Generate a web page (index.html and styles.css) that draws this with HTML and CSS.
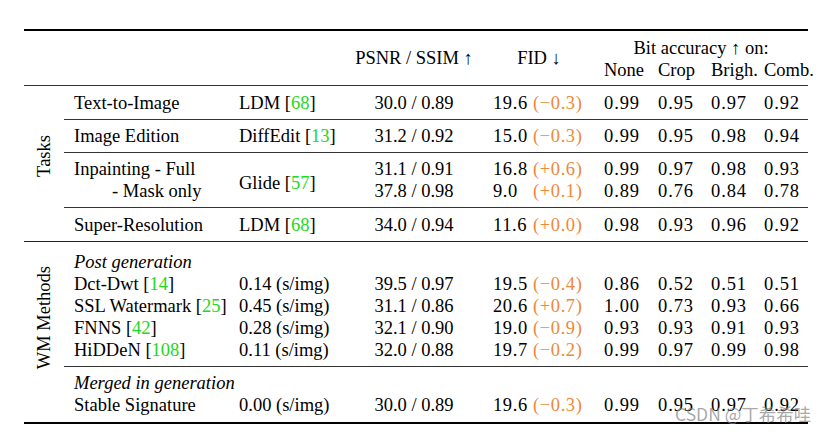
FILE: index.html
```html
<!DOCTYPE html>
<html>
<head>
<meta charset="utf-8">
<link rel="stylesheet" href="styles.css">
</head>
<body>
<div class="page">
<table class="results">
  <colgroup>
    <col class="c0"><col class="c1"><col class="c2"><col class="c3"><col class="c4">
    <col class="c5"><col class="c6"><col class="c7"><col class="c8">
  </colgroup>
  <thead>
    <tr class="h1">
      <th></th><th></th><th></th>
      <th rowspan="2" class="mid">PSNR / SSIM ↑</th>
      <th rowspan="2" class="mid">FID ↓</th>
      <th colspan="4" class="bitacc">Bit accuracy ↑ on:</th>
    </tr>
    <tr class="h2">
      <th></th><th></th><th></th>
      <th class="bit">None</th><th class="bit">Crop</th><th class="bit">Brigh.</th><th class="bit">Comb.</th>
    </tr>
  </thead>
  <tbody class="tasks">
    <tr class="single sep">
      <td rowspan="5" class="side side-tasks"><span class="vlabel">Tasks</span></td>
      <td class="label">Text-to-Image</td>
      <td class="method">LDM [<span class="cite">68</span>]</td>
      <td class="psnr">30.0 / 0.89</td>
      <td class="fid"><span class="fv">19.6</span><span class="delta">(−0.3)</span></td>
      <td class="bit num">0.99</td><td class="bit num">0.95</td><td class="bit num">0.97</td><td class="bit num">0.92</td>
    </tr>
    <tr class="single short sep">
      <td class="label">Image Edition</td>
      <td class="method">DiffEdit [<span class="cite">13</span>]</td>
      <td class="psnr">31.2 / 0.92</td>
      <td class="fid"><span class="fv">15.0</span><span class="delta">(−0.3)</span></td>
      <td class="bit num">0.99</td><td class="bit num">0.95</td><td class="bit num">0.98</td><td class="bit num">0.94</td>
    </tr>
    <tr class="first">
      <td class="label">Inpainting - Full</td>
      <td rowspan="2" class="method sepcell">Glide [<span class="cite">57</span>]</td>
      <td class="psnr">31.1 / 0.91</td>
      <td class="fid"><span class="fv">16.8</span><span class="delta">(+0.6)</span></td>
      <td class="bit num">0.99</td><td class="bit num">0.97</td><td class="bit num">0.98</td><td class="bit num">0.93</td>
    </tr>
    <tr class="last sep">
      <td class="label indent">- Mask only</td>
      <td class="psnr">37.8 / 0.98</td>
      <td class="fid"><span class="fv">9.0</span><span class="delta">(+0.1)</span></td>
      <td class="bit num">0.89</td><td class="bit num">0.76</td><td class="bit num">0.84</td><td class="bit num">0.78</td>
    </tr>
    <tr class="single">
      <td class="label">Super-Resolution</td>
      <td class="method">LDM [<span class="cite">68</span>]</td>
      <td class="psnr">34.0 / 0.94</td>
      <td class="fid"><span class="fv">11.6</span><span class="delta">(+0.0)</span></td>
      <td class="bit num">0.98</td><td class="bit num">0.93</td><td class="bit num">0.96</td><td class="bit num">0.92</td>
    </tr>
  </tbody>
  <tbody class="wm">
    <tr class="group-head g1">
      <td rowspan="8" class="side side-wm"><span class="vlabel">WM Methods</span></td>
      <td class="label"><em>Post generation</em></td>
      <td></td><td></td><td></td><td></td><td></td><td></td><td></td>
    </tr>
    <tr class="line">
      <td class="label">Dct-Dwt [<span class="cite">14</span>]</td>
      <td class="method">0.14 (s/img)</td>
      <td class="psnr">39.5 / 0.97</td>
      <td class="fid"><span class="fv">19.5</span><span class="delta">(−0.4)</span></td>
      <td class="bit num">0.86</td><td class="bit num">0.52</td><td class="bit num">0.51</td><td class="bit num">0.51</td>
    </tr>
    <tr class="line">
      <td class="label">SSL Watermark [<span class="cite">25</span>]</td>
      <td class="method">0.45 (s/img)</td>
      <td class="psnr">31.1 / 0.86</td>
      <td class="fid"><span class="fv">20.6</span><span class="delta">(+0.7)</span></td>
      <td class="bit num">1.00</td><td class="bit num">0.73</td><td class="bit num">0.93</td><td class="bit num">0.66</td>
    </tr>
    <tr class="line">
      <td class="label">FNNS [<span class="cite">42</span>]</td>
      <td class="method">0.28 (s/img)</td>
      <td class="psnr">32.1 / 0.90</td>
      <td class="fid"><span class="fv">19.0</span><span class="delta">(−0.9)</span></td>
      <td class="bit num">0.93</td><td class="bit num">0.93</td><td class="bit num">0.91</td><td class="bit num">0.93</td>
    </tr>
    <tr class="line g1-end sep">
      <td class="label">HiDDeN [<span class="cite">108</span>]</td>
      <td class="method">0.11 (s/img)</td>
      <td class="psnr">32.0 / 0.88</td>
      <td class="fid"><span class="fv">19.7</span><span class="delta">(−0.2)</span></td>
      <td class="bit num">0.99</td><td class="bit num">0.97</td><td class="bit num">0.99</td><td class="bit num">0.98</td>
    </tr>
    <tr class="group-head g2">
      <td class="label"><em>Merged in generation</em></td>
      <td></td><td></td><td></td><td></td><td></td><td></td><td></td>
    </tr>
    <tr class="line g2-end">
      <td class="label">Stable Signature</td>
      <td class="method">0.00 (s/img)</td>
      <td class="psnr">30.0 / 0.89</td>
      <td class="fid"><span class="fv">19.6</span><span class="delta">(−0.3)</span></td>
      <td class="bit num">0.99</td><td class="bit num">0.95</td><td class="bit num">0.97</td><td class="bit num">0.92</td>
    </tr>
  </tbody>
</table>
<div class="watermark">CSDN @丁希希哇</div>
</div>
</body>
</html>
```

FILE: styles.css
```css
html, body {
  margin: 0;
  padding: 0;
  background: #ffffff;
}

.page {
  position: relative;
  width: 826px;
  height: 432px;
  padding-top: 29px;
  padding-left: 24px;
  box-sizing: border-box;
  font-family: "Liberation Serif", "Times New Roman", serif;
  color: #000;
}

.results {
  border-collapse: collapse;
  table-layout: fixed;
  width: 784px;
  font-size: 18.5px;
  line-height: 22px;
  border-top: 2px solid #000;
  border-bottom: 2px solid #000;
}

.c0 { width: 40px; }
.c1 { width: 170px; }
.c2 { width: 116px; }
.c3 { width: 128px; }
.c4 { width: 122px; }
.c5 { width: 54px; }
.c6 { width: 53px; }
.c7 { width: 53px; }
.c8 { width: 48px; }

th, td {
  padding: 0;
  white-space: nowrap;
  font-weight: normal;
  text-align: left;
  vertical-align: middle;
}

thead tr.h1 th { height: 28px; vertical-align: bottom; }
thead tr.h2 th { height: 26px; vertical-align: top; }
thead tr.h2 { border-bottom: 1px solid #333; }
thead th.mid { text-align: center; vertical-align: middle; padding-top: 0; }
thead tr.h1 th.mid { vertical-align: middle; }
thead th.bitacc { text-align: center; padding-right: 6px; }

.bit { padding-left: 4px; }
.num { letter-spacing: 0.9px; }

.label { padding-left: 10px; }
.label.indent { padding-left: 48px; }
.method { padding-left: 5px; }
.psnr { text-align: center; }
.fid { padding-left: 15px; letter-spacing: 0.6px; }
.fv { display: inline-block; width: 40px; }
.delta { color: #f0883a; }
.cite { color: #22d822; }

/* Tasks block */
.tasks tr.single td { height: 33px; }
.tasks tr.single.short td { height: 32px; }
.tasks tr.first td { padding-top: 5px; }
.tasks tr.last td { padding-bottom: 5px; }
.tasks tr.sep td:not(.side) { border-bottom: 1px solid #333; }
.tasks td.sepcell { border-bottom: 1px solid #333; }
.tasks tr:last-child { border-bottom: 1px solid #222; }

/* WM block */
.wm tr.line td { height: 22px; }
.wm tr.g1 td:not(.side) { padding-top: 9px; }
.wm tr.g1-end td:not(.side) { padding-bottom: 5px; border-bottom: 1px solid #333; }
.wm tr.g2 td:not(.side) { padding-top: 5px; }
.wm tr.g2-end td { padding-bottom: 6px; }

.side { text-align: center; vertical-align: middle; }
.side-tasks { padding-bottom: 10px; }
.side-wm { padding-bottom: 24px; }
.vlabel {
  display: inline-block;
  writing-mode: vertical-rl;
  transform: rotate(180deg);
  white-space: nowrap;
}

.watermark {
  position: absolute;
  left: 675px;
  top: 404px;
  font-family: "Noto Sans CJK SC", "Noto Sans", sans-serif;
  font-size: 17.5px;
  line-height: 20px;
  color: rgba(130, 130, 130, 0.7);
}
```
